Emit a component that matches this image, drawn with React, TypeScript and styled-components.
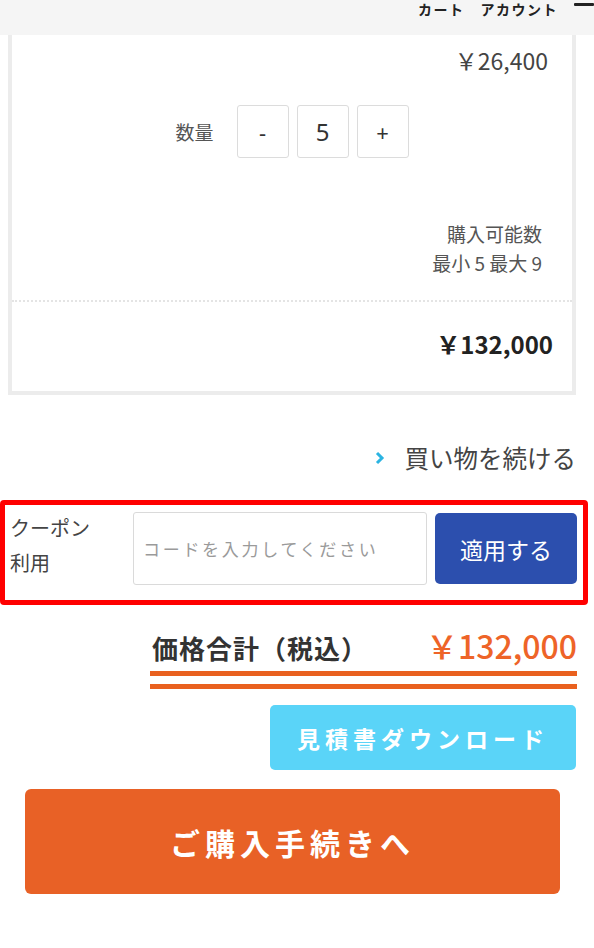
import React from "react";
import styled, { createGlobalStyle } from "styled-components";

const GlobalStyle = createGlobalStyle`
  html, body { margin: 0; padding: 0; background: #ffffff; }
  body {
    font-family: "Noto Sans CJK JP", "Noto Sans", sans-serif;
    color: #333;
    width: 594px;
    overflow: hidden;
  }
  * { box-sizing: border-box; }
`;

const Page = styled.div`
  width: 594px;
  min-height: 948px;
  display: flex;
  flex-direction: column;
  background: #fff;
`;

const Header = styled.header`
  height: 35px;
  background: #f5f5f5;
  display: flex;
  justify-content: flex-end;
  align-items: flex-start;
  gap: 16px;
  padding-top: 0;
`;

const NavLink = styled.span`
  font-size: 14px;
  font-weight: 700;
  letter-spacing: 1.5px;
  line-height: 18px;
  color: #222;
`;

const Burger = styled.span`
  width: 20px;
  height: 3px;
  margin-top: 3px;
  background: #222;
  border-radius: 1px;
`;

const Card = styled.section`
  margin-left: 8px;
  width: 568px;
  border: 4px solid #ececec;
  border-top: none;
  display: flex;
  flex-direction: column;
`;

const UnitPrice = styled.div`
  text-align: right;
  padding: 10px 24px 0 0;
  font-size: 23px;
  line-height: 30px;
  color: #444;
`;

const QtyRow = styled.div`
  display: flex;
  justify-content: center;
  align-items: center;
  margin-top: 30px;
  gap: 8px;
`;

const QtyLabel = styled.span`
  font-size: 19px;
  color: #555;
  margin-right: 9px;
  padding-right: 6px;
`;

const QtyBox = styled.div<{ $big?: boolean }>`
  width: 52px;
  height: 53px;
  border: 1px solid #dcdcdc;
  border-radius: 3px;
  display: flex;
  align-items: center;
  justify-content: center;
  font-family: "Noto Sans", "Noto Sans CJK JP", sans-serif;
  font-size: ${(p) => (p.$big ? "24px" : "22px")};
  color: #333;
`;

const Limits = styled.div`
  text-align: right;
  padding: 0 30px 0 0;
  margin-top: 61px;
  font-size: 19px;
  line-height: 29px;
  color: #555;
`;

const Dotted = styled.hr`
  margin: 23px 0 0;
  border: none;
  border-top: 2px dotted #e4e4e4;
`;

const Subtotal = styled.div`
  text-align: right;
  padding: 26px 19px 31px 0;
  font-size: 24px;
  font-weight: 700;
  line-height: 32px;
  color: #222;
`;

const ContinueRow = styled.div`
  display: flex;
  justify-content: flex-end;
  align-items: center;
  gap: 20px;
  padding-right: 18px;
  margin-top: 47px;
  font-size: 24.5px;
  color: #444;
  line-height: 32px;
`;

const Chevron = styled.svg`
  width: 10px;
  height: 14px;
`;

const CouponBox = styled.div`
  margin-top: 26px;
  width: 588px;
  border: 5px solid #ff0000;
  border-radius: 4px;
  display: flex;
  align-items: flex-start;
  padding: 7px 6px 15px 5px;
`;

const CouponLabel = styled.div`
  width: 123px;
  padding-left: 0;
  margin-top: -2px;
  font-size: 20px;
  line-height: 35px;
  color: #444;
`;

const CouponInput = styled.input`
  width: 294px;
  height: 73px;
  border: 1px solid #dadada;
  border-radius: 3px;
  padding: 0 9px;
  font-family: "Noto Sans CJK JP", sans-serif;
  font-size: 17px;
  letter-spacing: 2.7px;
  color: #333;
  outline: none;
  &::placeholder { color: #9a9a9a; }
`;

const ApplyButton = styled.button`
  margin-left: 8px;
  width: 142px;
  height: 71px;
  margin-top: 1px;
  border: none;
  border-radius: 5px;
  background: #2c4fae;
  color: #fff;
  font-family: "Noto Sans CJK JP", sans-serif;
  font-size: 23px;
`;

const TotalBlock = styled.div`
  margin: 20px 17px 0 150px;
  display: flex;
  flex-direction: column;
`;

const TotalRow = styled.div`
  display: flex;
  justify-content: space-between;
  align-items: baseline;
  padding-left: 2px;
`;

const TotalLabel = styled.span`
  font-size: 26px;
  font-weight: 700;
  letter-spacing: 1px;
  color: #333;
`;

const TotalPrice = styled.span`
  font-size: 32px;
  font-weight: 500;
  color: #ee6428;
  line-height: 40px;
`;

const DoubleLine = styled.div`
  margin-top: 5px;
  height: 18px;
  border-top: 5px solid #e9611f;
  border-bottom: 5px solid #e9611f;
`;

const QuoteButton = styled.button`
  align-self: flex-end;
  margin: 16px 18px 0 0;
  width: 306px;
  height: 65px;
  border: none;
  border-radius: 5px;
  background: #5ad4f8;
  color: #fff;
  font-family: "Noto Sans CJK JP", sans-serif;
  font-size: 23px;
  font-weight: 700;
  letter-spacing: 5px;
  padding-left: 6px;
`;

const CheckoutButton = styled.button`
  margin: 19px 0 0 25px;
  width: 535px;
  height: 105px;
  border: none;
  border-radius: 6px;
  background: #e86126;
  color: #fff;
  font-family: "Noto Sans CJK JP", sans-serif;
  font-size: 30px;
  font-weight: 700;
  letter-spacing: 5px;
`;

export default function App() {
  return (
    <>
      <GlobalStyle />
      <Page>
        <Header>
          <NavLink>カート</NavLink>
          <NavLink>アカウント</NavLink>
          <Burger />
        </Header>
        <Card>
          <UnitPrice>￥26,400</UnitPrice>
          <QtyRow>
            <QtyLabel>数量</QtyLabel>
            <QtyBox>-</QtyBox>
            <QtyBox $big>5</QtyBox>
            <QtyBox>+</QtyBox>
          </QtyRow>
          <Limits>
            <div>購入可能数</div>
            <div>最小 5 最大 9</div>
          </Limits>
          <Dotted />
          <Subtotal>￥132,000</Subtotal>
        </Card>
        <ContinueRow>
          <Chevron viewBox="0 0 10 14">
            <path d="M2 2 L7 7 L2 12" fill="none" stroke="#2bb4e2" strokeWidth="3" />
          </Chevron>
          <span>買い物を続ける</span>
        </ContinueRow>
        <CouponBox>
          <CouponLabel>
            クーポン
            <br />
            利用
          </CouponLabel>
          <CouponInput placeholder="コードを入力してください" />
          <ApplyButton>適用する</ApplyButton>
        </CouponBox>
        <TotalBlock>
          <TotalRow>
            <TotalLabel>価格合計（税込）</TotalLabel>
            <TotalPrice>￥132,000</TotalPrice>
          </TotalRow>
          <DoubleLine />
        </TotalBlock>
        <QuoteButton>見積書ダウンロード</QuoteButton>
        <CheckoutButton>ご購入手続きへ</CheckoutButton>
      </Page>
    </>
  );
}
